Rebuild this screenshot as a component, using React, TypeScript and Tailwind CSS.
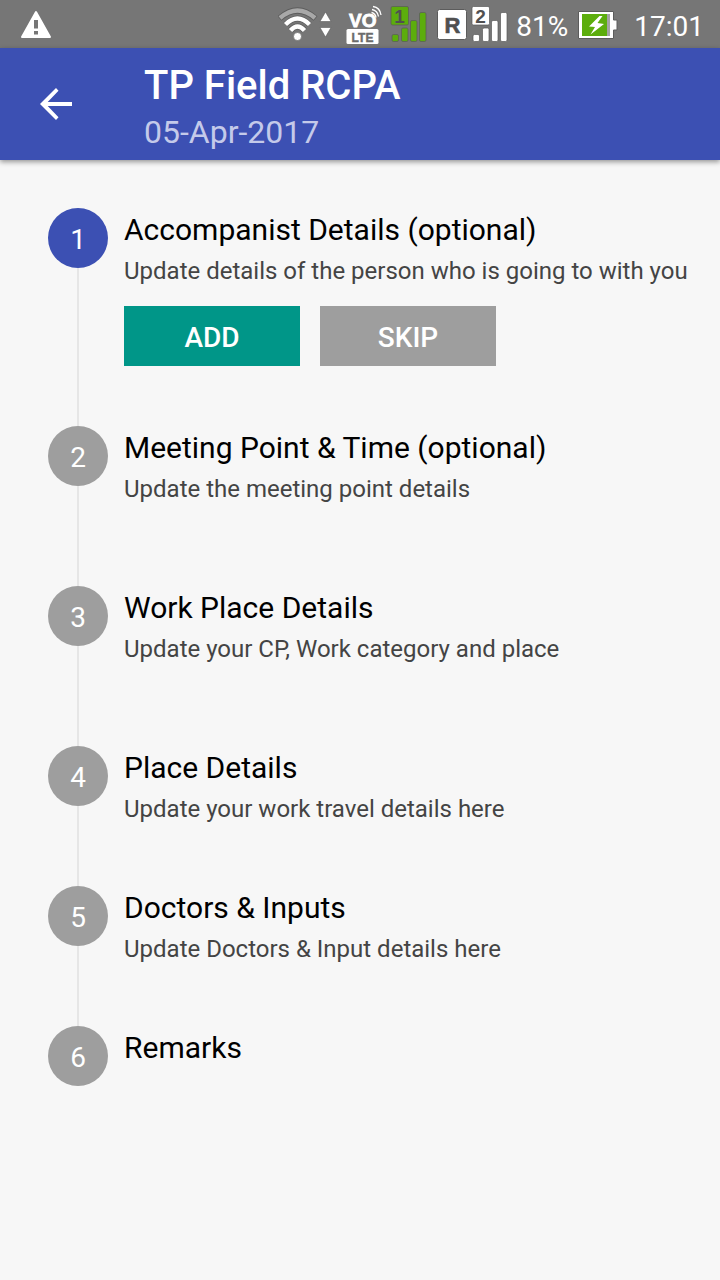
import React from 'react'

const steps = [
  {
    title: 'Accompanist Details (optional)',
    text: 'Update details of the person who is going to with you',
    active: true,
    space: 'pb-[60px]',
  },
  {
    title: 'Meeting Point & Time (optional)',
    text: 'Update the meeting point details',
    space: 'pb-20',
  },
  {
    title: 'Work Place Details',
    text: 'Update your CP, Work category and place',
    space: 'pb-20',
  },
  {
    title: 'Place Details',
    text: 'Update your work travel details here',
    space: 'pb-[60px]',
  },
  {
    title: 'Doctors & Inputs',
    text: 'Update Doctors & Input details here',
    space: 'pb-[60px]',
  },
  { title: 'Remarks', space: 'pb-5' },
]

const WarningIcon = () => (
  <svg width="32" height="48" viewBox="0 0 32 48" aria-hidden="true">
    <path d="M16 12 L30 37 H2 Z" fill="#fff" stroke="#fff" strokeWidth="2" strokeLinejoin="round" />
    <path d="M14 20h4v8.500h-4zM14 31h4v3.500h-4z" fill="#767676" />
  </svg>
)

const WifiIcon = () => (
  <svg width="56" height="48" viewBox="0 0 56 48" aria-hidden="true">
    <g fill="none" strokeLinecap="butt">
      <path d="M1.500 18.500 Q19.500 2.500 37.500 18.500" stroke="#5c5c5c" strokeWidth="6" />
      <path d="M2 18 Q19.500 3 37 18" stroke="#a8a8a8" strokeWidth="4.500" />
      <path d="M7.500 24.500 Q19.500 12.500 31.500 24.500" stroke="#5c5c5c" strokeWidth="5.800" />
      <path d="M7.500 24.500 Q19.500 12.500 31.500 24.500" stroke="#fff" strokeWidth="4.400" />
      <path d="M12.500 30.500 Q19.500 22.500 26.500 30.500" stroke="#5c5c5c" strokeWidth="5.800" />
      <path d="M12.500 30.500 Q19.500 22.500 26.500 30.500" stroke="#fff" strokeWidth="4.400" />
    </g>
    <circle cx="19.500" cy="36.500" r="4" fill="#fff" stroke="#5c5c5c" strokeWidth="0.600" />
    <path d="M47.500 12 L53 21.500 H42 Z M47.500 37 L53 27.500 H42 Z" fill="#fff" stroke="#5c5c5c" strokeWidth="0.600" />
  </svg>
)

const VolteIcon = () => (
  <svg width="38" height="48" viewBox="0 0 38 48" role="img" aria-label="VoLTE">
    <text x="3" y="26.500" fontFamily="Liberation Sans, sans-serif" fontSize="19" fontWeight="700" fill="#fff" stroke="#fff" strokeWidth="0.800">VO</text>
    <path d="M25.500 12.500 Q29.500 13.500 30 17.500 M26 9.500 Q31.500 10.500 32.500 16.500 M27 6.500 Q34 7.500 35 15" fill="none" stroke="#fff" strokeWidth="1.300" />
    <rect x="0.500" y="29" width="32" height="15" rx="1.500" fill="#fff" />
    <text x="16.500" y="42" textAnchor="middle" fontFamily="Liberation Sans, sans-serif" fontSize="12" fontWeight="700" fill="#6b6b6b" stroke="#6b6b6b" strokeWidth="0.400">LTE</text>
  </svg>
)

const SignalIcon = ({ sim, color }: { sim: string; color: string }) => (
  <svg width="37" height="48" viewBox="0 0 37 48" role="img" aria-label={`SIM ${sim} signal`}>
    <g fill={color} stroke="#5a5a5a" strokeWidth="0.700">
      <rect x="1" y="6.500" width="17.500" height="18.500" rx="1.500" />
      <rect x="2" y="34.500" width="6.500" height="7" rx="1.500" />
      <rect x="11.500" y="28" width="6.500" height="13.500" rx="1.500" />
      <rect x="20.500" y="20.500" width="6.500" height="21" rx="1.500" />
      <rect x="29.500" y="12.500" width="6.500" height="29" rx="1.500" />
    </g>
    <text x="9.500" y="22.500" textAnchor="middle" fontFamily="Liberation Sans, sans-serif" fontSize="19" fontWeight="700" fill="#505050">{sim}</text>
  </svg>
)

const RoamingIcon = () => (
  <svg width="30" height="48" viewBox="0 0 30 48" role="img" aria-label="Roaming">
    <rect x="0.500" y="9.500" width="29" height="30" rx="2" fill="#fff" stroke="#5c5c5c" />
    <text x="15.500" y="32.500" textAnchor="middle" fontFamily="Liberation Sans, sans-serif" fontSize="22" fontWeight="700" fill="#505050" stroke="#505050" strokeWidth="0.600">R</text>
  </svg>
)

const BatteryIcon = () => (
  <svg width="40" height="48" viewBox="0 0 40 48" aria-hidden="true">
    <path d="M0.500 11.500h35v8.500h3.500v10h-3.500v8.500h-35z" fill="#fff" stroke="#5c5c5c" />
    <rect x="4" y="14" width="28" height="22" fill="#a3a3a3" />
    <rect x="4" y="14" width="25" height="22" fill="#5cad0c" />
    <path d="M21.500 16 L11 26.500 L17 27 L12.500 34.500 L26 24 L19.500 23 L24.500 16 Z" fill="#fff" />
  </svg>
)

const BackIcon = () => (
  <svg width="32" height="32" viewBox="0 0 32 32" aria-hidden="true">
    <path d="M32 14H7.700L18.500 2.800L16 0L0 16L16 32L18.500 29.200L7.700 18H32Z" fill="#fff" />
  </svg>
)

const StatusBar = () => {
  return (
    <div className="flex h-12 items-center justify-between bg-[#767676] pl-5 pr-4 text-white">
      <WarningIcon />
      <div className="flex items-center text-[28px] leading-8">
        <WifiIcon />
        <div className="ml-3 flex items-center gap-1.5">
          <VolteIcon />
          <SignalIcon sim="1" color="#5cad0c" />
        </div>
        <div className="ml-2.5 flex items-center gap-1">
          <RoamingIcon />
          <SignalIcon sim="2" color="#fff" />
        </div>
        <span className="ml-2 mt-1.5">81%</span>
        <div className="ml-2.5">
          <BatteryIcon />
        </div>
        <span className="ml-4 mt-1.5">17:01</span>
      </div>
    </div>
  )
}

const Header = () => {
  return (
    <header className="flex h-28 items-center bg-[#3c50b3] pl-10 text-white shadow-[0_2px_5px_rgba(0,0,0,0.4)]">
      <button type="button" aria-label="Back">
        <BackIcon />
      </button>
      <div className="ml-[72px] pt-2.5">
        <h1 className="text-[40px] font-medium leading-[46px]">TP Field RCPA</h1>
        <p className="text-[32px] leading-[46px] text-[#c4caea]">05-Apr-2017</p>
      </div>
    </header>
  )
}

const App = () => {
  return (
    <div className="min-h-screen bg-[#f7f7f7] font-['Roboto',sans-serif]">
      <StatusBar />
      <Header />
      <main className="px-6 py-12">
        <ol className="pl-6">
          {steps.map((step, index) => (
            <li key={step.title} className="flex gap-4">
              <div className="flex shrink-0 flex-col items-center">
                <span
                  className={`flex size-[60px] items-center justify-center rounded-full pt-1 text-[28px] text-white ${
                    step.active ? 'bg-[#3c50b3]' : 'bg-[#9e9e9e]'
                  }`}
                >
                  {index + 1}
                </span>
                {index < steps.length - 1 && <span className="w-0.5 flex-1 bg-[#e6e6e6]"></span>}
              </div>
              <div className={step.space}>
                <h2 className="pt-0.5 text-[30px] leading-10 text-black">{step.title}</h2>
                {step.text && <p className="pt-1 text-2xl leading-[34px] text-[#444]">{step.text}</p>}
                {step.active && (
                  <div className="mt-[18px] flex gap-5 text-[28px] font-medium text-white">
                    <button type="button" className="h-[60px] w-44 bg-[#009688] pt-1">ADD</button>
                    <button type="button" className="h-[60px] w-44 bg-[#9e9e9e] pt-1">SKIP</button>
                  </div>
                )}
              </div>
            </li>
          ))}
        </ol>
      </main>
    </div>
  )
}

export default App
